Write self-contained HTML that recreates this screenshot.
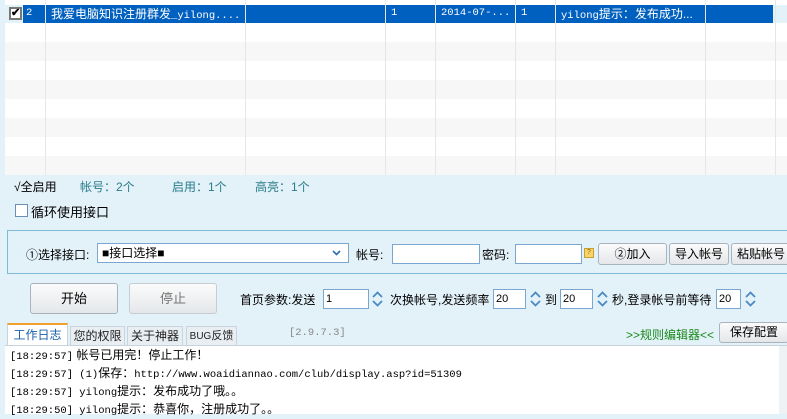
<!DOCTYPE html><html><head><meta charset="utf-8"><style>
*{box-sizing:border-box;margin:0;padding:0}
body{width:787px;height:414px;overflow:hidden;background:#e3f1f9;font-family:"Liberation Sans","Noto Sans CJK SC",sans-serif;font-size:12px;color:#000;position:relative}
.a{position:absolute;white-space:nowrap}
.mono{font-family:"Liberation Mono","Noto Sans CJK SC",monospace;font-size:10.5px}
.row{position:absolute;left:5px;width:782px;height:19px}
.vl{position:absolute;top:0;width:1px;height:175px;background:#e6e6e6}
.inp{position:absolute;background:#fff;border:1px solid #7aa7cf;height:20px}
.btn{position:absolute;border:1px solid #a9b3bd;border-radius:3px;background:linear-gradient(#fbfbfb,#e4e7ea);text-align:center;font-size:13px}
.spin{position:absolute;width:13px;height:20px}
.tab{position:absolute;top:326px;height:20px;background:#e9eef2;border:1px solid #c9d3dc;border-bottom:none;font-size:12px;line-height:19px;color:#222;text-align:center;overflow:visible}
.l{font-size:12px}
</style></head><body>
<div class="row" style="top:-14px;background:#fff"></div>
<div class="row" style="top:5px;left:23px;width:750px;background:#0060bf"></div>
<div class="row" style="top:23px;background:#fff"></div>
<div class="row" style="top:42px;background:#f7f7f7"></div>
<div class="row" style="top:61px;background:#fff"></div>
<div class="row" style="top:80px;background:#f7f7f7"></div>
<div class="row" style="top:99px;background:#fff"></div>
<div class="row" style="top:118px;background:#f7f7f7"></div>
<div class="row" style="top:137px;background:#fff"></div>
<div class="row" style="top:156px;background:#f7f7f7"></div>
<div class="vl" style="left:45px"></div><div class="vl" style="left:245px"></div><div class="vl" style="left:385px"></div><div class="vl" style="left:435px"></div><div class="vl" style="left:515px"></div><div class="vl" style="left:555px"></div><div class="vl" style="left:705px"></div><div class="vl" style="left:775px"></div>
<div class="a" style="left:9px;top:7px;width:13px;height:13px;background:#fff;border:2px solid #777;font-size:11px;line-height:9px;text-align:center;font-weight:bold">✔</div>
<div class="a mono" style="left:26px;top:7px;color:#fff">2</div>
<div class="a" style="left:51px;top:5px;color:#fff;font-size:12px">我爱电脑知识注册群发<span class="mono">_yilong....</span></div>
<div class="a mono" style="left:391px;top:7px;color:#fff">1</div>
<div class="a mono" style="left:441px;top:7px;color:#fff">2014-07-...</div>
<div class="a mono" style="left:521px;top:7px;color:#fff">1</div>
<div class="a" style="left:561px;top:5px;color:#fff"><span class="mono">yilong</span>提示：发布成功...</div>
<div class="a" style="left:14px;top:178px">√全启用</div>
<div class="a" style="left:80px;top:178px;color:#2a7c8a">帐号：2个</div>
<div class="a" style="left:172px;top:178px;color:#2a7c8a">启用：1个</div>
<div class="a" style="left:255px;top:178px;color:#2a7c8a">高亮：1个</div>
<div class="a" style="left:15px;top:204px;width:13px;height:13px;background:#fff;border:1px solid #6a8fb5"></div>
<div class="a" style="left:31px;top:202px;font-size:13px">循环使用接口</div>
<div class="a" style="left:7px;top:230px;width:790px;height:44px;border:1px solid #7fbbd9"></div>
<div class="a l" style="left:26px;top:246px">①选择接口:</div>
<div class="inp" style="left:97px;top:243px;width:252px;font-size:12px;padding-left:4px;line-height:18px">■接口选择■<svg style="position:absolute;right:7px;top:6px" width="9" height="6"><path d="M1 1L4.5 4.5L8 1" stroke="#2a6cb0" stroke-width="1.6" fill="none"/></svg></div>
<div class="a l" style="left:356px;top:246px">帐号:</div>
<div class="inp" style="left:392px;top:244px;width:88px"></div>
<div class="a l" style="left:482px;top:246px">密码:</div>
<div class="inp" style="left:515px;top:244px;width:67px"></div>
<div class="a" style="left:584px;top:248px;width:10px;height:10px;background:#f8d56a;border:1px solid #c9a030;font-size:7px;line-height:8px;text-align:center;color:#8a6000">?</div>
<div class="btn" style="left:598px;top:243px;width:69px;height:22px;line-height:20px;font-size:12px">②加入</div>
<div class="btn" style="left:669px;top:243px;width:60px;height:22px;line-height:20px;font-size:12px">导入帐号</div>
<div class="btn" style="left:731px;top:243px;width:60px;height:22px;line-height:20px;font-size:12px">粘贴帐号</div>
<div class="btn" style="left:30px;top:283px;width:88px;height:31px;line-height:29px">开始</div>
<div class="btn" style="left:129px;top:283px;width:88px;height:31px;line-height:29px;color:#777;border-color:#c5ccd2">停止</div>
<div class="a l" style="left:240px;top:291px">首页参数:发送</div>
<div class="inp" style="left:323px;top:289px;width:46px;font-size:11px;padding-left:2px;line-height:18px">1</div>
<svg class="spin" style="left:371px;top:289px" viewBox="0 0 13 20"><path d="M2 8L6.5 3.5L11 8M2 12L6.5 16.5L11 12" stroke="#4a8ac4" stroke-width="1.8" fill="none"/></svg>
<div class="a l" style="left:390px;top:291px">次换帐号,发送频率</div>
<div class="inp" style="left:493px;top:289px;width:33px;font-size:11px;padding-left:2px;line-height:18px">20</div>
<svg class="spin" style="left:529px;top:289px" viewBox="0 0 13 20"><path d="M2 8L6.5 3.5L11 8M2 12L6.5 16.5L11 12" stroke="#4a8ac4" stroke-width="1.8" fill="none"/></svg>
<div class="a l" style="left:545px;top:291px">到</div>
<div class="inp" style="left:560px;top:289px;width:33px;font-size:11px;padding-left:2px;line-height:18px">20</div>
<svg class="spin" style="left:596px;top:289px" viewBox="0 0 13 20"><path d="M2 8L6.5 3.5L11 8M2 12L6.5 16.5L11 12" stroke="#4a8ac4" stroke-width="1.8" fill="none"/></svg>
<div class="a l" style="left:612px;top:291px">秒,登录帐号前等待</div>
<div class="inp" style="left:716px;top:289px;width:25px;font-size:11px;padding-left:2px;line-height:18px">20</div>
<svg class="spin" style="left:744px;top:289px" viewBox="0 0 13 20"><path d="M2 8L6.5 3.5L11 8M2 12L6.5 16.5L11 12" stroke="#4a8ac4" stroke-width="1.8" fill="none"/></svg>
<div class="tab" style="left:7px;width:61px;top:323px;height:23px;background:#fff;border-top:2px solid #f0a030;color:#1a5fa8;line-height:21px">工作日志</div>
<div class="tab" style="left:70px;width:55px">您的权限</div>
<div class="tab" style="left:127px;width:56px">关于神器</div>
<div class="tab" style="left:186px;width:51px;white-space:nowrap;font-size:11px"><span style="font-size:10px">BUG</span>反馈</div>
<div class="a mono" style="left:289px;top:327px;color:#888">[2.9.7.3]</div>
<div class="a" style="left:626px;top:326px;color:#1a8a1a;font-size:12px">&gt;&gt;规则编辑器&lt;&lt;</div>
<div class="btn" style="left:719px;top:322px;width:70px;height:21px;line-height:19px;font-size:12px">保存配置</div>
<div class="a" style="left:5px;top:345px;width:782px;height:69px;background:#fff;border-top:1px solid #c9d3dc"></div>
<div class="a" style="left:779px;top:346px;width:8px;height:68px;background:#eef2f5"></div>
<div class="a" style="left:10px;top:347px;line-height:16px;font-size:12px"><span class="mono">[18:29:57]</span> 帐号已用完！停止工作！<br><span class="mono">[18:29:57] (1)</span>保存：<span class="mono">http://www.woaidiannao.com/club/display.asp?id=51309</span><br><span class="mono">[18:29:57] yilong</span>提示：发布成功了哦。。<br><span class="mono">[18:29:50] yilong</span>提示：恭喜你，注册成功了。。</div>
</body></html>
